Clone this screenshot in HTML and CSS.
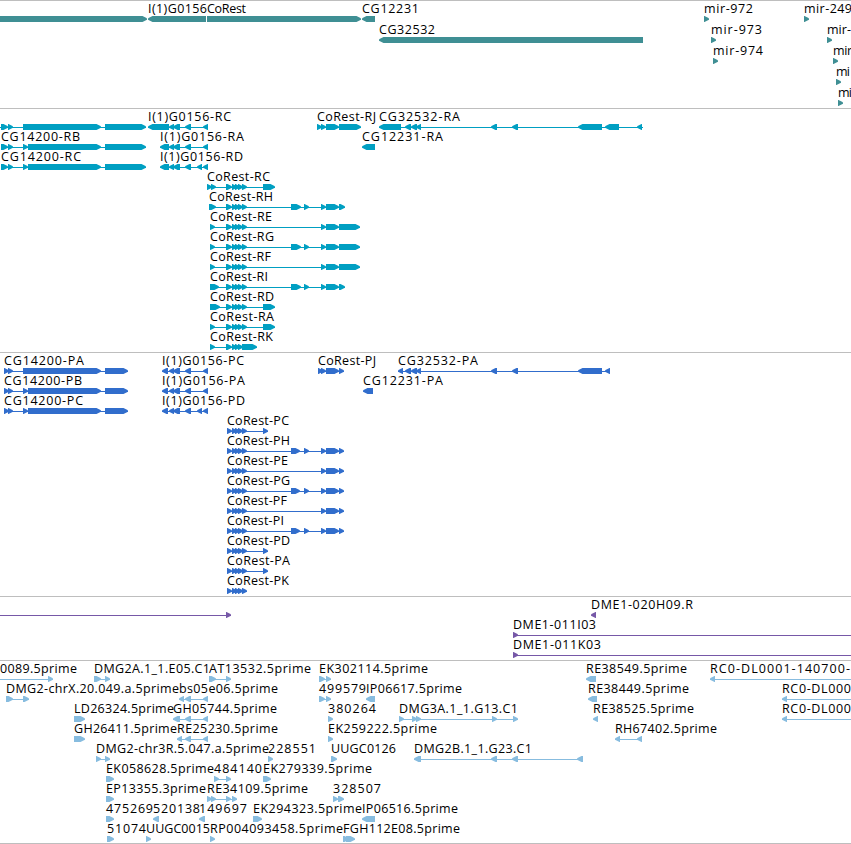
FILE: index.html
```html
<!DOCTYPE html>
<html lang="en">
<head>
    <meta charset="UTF-8">
    <title>Genome Browser</title>
    <link rel="stylesheet" href="styles.css">
</head>
<body>
    <main class="browser">
        <section class="track genes" id="genes"></section>
        <section class="track transcripts" id="transcripts"></section>
        <section class="track proteins" id="proteins"></section>
        <section class="track bacs" id="bacs"></section>
        <section class="track ests" id="ests"></section>
    </main>
    <script src="tracks.js"></script>
</body>
</html>
```
FILE: styles.css
```css
body {
    margin: 0;
    background: #fff;
    overflow: hidden;
}
.browser {
    display: flex;
    flex-direction: column;
    width: 851px;
    height: 844px;
    box-sizing: border-box;
    border-bottom: 1px solid #bebebe;
}
.track {
    box-sizing: border-box;
    border-top: 1px solid #bebebe;
    overflow: hidden;
}
.track svg {
    display: block;
    width: 100%;
    height: 100%;
}
.track text {
    font-family: "Open Sans", "DejaVu Sans", sans-serif;
    font-size: 12.5px;
    fill: #000;
}
.genes {
    height: 108px;
    color: #3f8f94;
}
.transcripts {
    height: 244px;
    color: #009fc2;
}
.proteins {
    height: 244px;
    color: #316dcc;
}
.bacs {
    height: 64px;
    color: #7658a7;
}
.ests {
    height: 183px;
    color: #87bcdf;
}
.feature {
    fill: currentColor;
}
```
FILE: tracks.js
```js
// feature: [row, label, label start, label end, direction, line, blocks]
// line and blocks are "start-end" pairs
const exons = '226-232 232-237 235-240 238-243 242-247';
const coding = '227-232 232-237 235-240 238-243 242-247';

const genes = [
    [0, '', 0, 0, '>', '', '0-147'],
    [0, 'I(1)G0156', 148, 207, '<', '', '148-206'],
    [0, 'CoRest', 207, 246, '>', '', '207-361'],
    [0, 'CG12231', 362, 419, '<', '', '362-375'],
    [1, 'CG32532', 379, 435, '<', '', '379-643'],
    [0, 'mir-972', 704, 753, '>', '', '704-709'],
    [1, 'mir-973', 711, 762, '>', '', '711-716'],
    [2, 'mir-974', 713, 763, '>', '', '713-718'],
    [0, 'mir-249', 804, 852, '>', '', '804-809'],
    [1, 'mir-', 827, 851, '>', '', '827-832'],
    [2, 'mir', 833, 852, '>', '', '833-838'],
    [3, 'mi', 836, 850, '>', '', '836-841'],
    [4, 'mi', 838, 852, '>', '', '838-843']
];

const transcripts = [
    [0, '', 0, 0, '>', '0-146', '1-8 8-13 23-101 105-146'],
    [0, 'I(1)G0156-RC', 148, 231, '<', '148-208', '148-169 169-174 173-180 185-191 203-208'],
    [0, 'CoRest-RJ', 317, 376, '>', '317-361', '317-322 321-326 326-339 339-361'],
    [0, 'CG32532-RA', 379, 460, '<', '379-643', '379-401 405-411 411-417 416-421 491-497 512-518 578-602 605-619 637-642'],
    [1, 'CG14200-RB', 1, 80, '>', '1-146', '1-8 8-13 23-28 28-101 105-146'],
    [1, 'I(1)G0156-RA', 160, 244, '<', '160-208', '160-169 169-174 173-180 185-191 203-208'],
    [1, 'CG12231-RA', 362, 443, '<', '', '362-375'],
    [2, 'CG14200-RC', 1, 81, '>', '1-146', '1-8 8-13 23-28 28-101 105-146'],
    [2, 'I(1)G0156-RD', 160, 243, '<', '160-208', '160-169 169-174 173-180 185-191 197-202 203-208'],
    [3, 'CoRest-RC', 207, 270, '>', '207-275', `207-212 211-216 ${exons} 263-275`],
    [4, 'CoRest-RH', 209, 273, '>', '209-345', `209-216 ${exons} 291-301 304-309 321-326 326-339 339-345`],
    [5, 'CoRest-RE', 210, 272, '>', '210-360', `210-215 ${exons} 321-326 326-339 339-360`],
    [6, 'CoRest-RG', 210, 274, '>', '210-360', `210-215 ${exons} 291-301 304-309 321-326 326-339 339-360`],
    [7, 'CoRest-RF', 210, 271, '>', '210-360', `210-215 ${exons} 321-326 326-339 339-360`],
    [8, 'CoRest-RI', 210, 268, '>', '210-345', `210-219 ${exons} 291-301 304-309 321-326 326-339 339-345`],
    [9, 'CoRest-RD', 210, 274, '>', '210-275', `210-220 ${exons} 263-275`],
    [10, 'CoRest-RA', 210, 274, '>', '210-275', `210-215 ${exons} 263-275`],
    [11, 'CoRest-RK', 210, 273, '>', '210-257', '210-215 226-232 232-237 235-240 238-243 242-257']
];

const proteins = [
    [0, 'CG14200-PA', 4, 84, '>', '4-128', '4-9 8-13 23-101 105-128'],
    [1, 'CG14200-PB', 4, 82, '>', '4-128', '4-9 8-13 23-28 28-101 105-128'],
    [2, 'CG14200-PC', 4, 83, '>', '4-128', '4-9 8-13 23-28 28-101 105-128'],
    [0, 'I(1)G0156-PC', 162, 244, '<', '162-208', '162-168 169-174 173-180 185-191 203-208'],
    [1, 'I(1)G0156-PA', 162, 245, '<', '162-208', '162-168 169-174 173-180 185-191 203-208'],
    [2, 'I(1)G0156-PD', 162, 245, '<', '162-208', '162-168 169-174 173-180 185-191 197-202 203-208'],
    [0, 'CoRest-PJ', 318, 376, '>', '318-344', '318-323 321-326 326-339 339-344'],
    [0, 'CG32532-PA', 398, 478, '<', '398-610', '398-403 405-411 411-417 416-421 491-497 512-518 578-602 605-610'],
    [1, 'CG12231-PA', 363, 443, '<', '', '363-373'],
    [3, 'CoRest-PC', 227, 289, '>', '227-268', `${coding} 263-268`],
    [4, 'CoRest-PH', 227, 290, '>', '227-344', `${coding} 291-300 304-309 321-326 326-339 339-344`],
    [5, 'CoRest-PE', 227, 288, '>', '227-344', `${coding} 321-326 326-339 339-344`],
    [6, 'CoRest-PG', 227, 290, '>', '227-344', `${coding} 291-300 304-309 321-326 326-339 339-344`],
    [7, 'CoRest-PF', 227, 287, '>', '227-344', `${coding} 321-326 326-339 339-344`],
    [8, 'CoRest-PI', 227, 284, '>', '227-344', `${coding} 291-300 304-309 321-326 326-339 339-344`],
    [9, 'CoRest-PD', 227, 290, '>', '227-268', `${coding} 263-268`],
    [10, 'CoRest-PA', 227, 290, '>', '227-268', `${coding} 263-268`],
    [11, 'CoRest-PK', 227, 289, '>', '227-247', coding]
];

const bacs = [
    [0, '', 0, 0, '>', '0-231', '226-231'],
    [0, 'DME1-020H09.R', 591, 693, '<', '', '591-596'],
    [1, 'DME1-011I03', 513, 596, '>', '513-851', '513-518'],
    [2, 'DME1-011K03', 513, 601, '>', '513-851', '513-518']
];

const ests = [
    [0, '0089.5prime', 0, 77, '>', '0-53', '48-53'],
    [0, 'DMG2A.1_1.E05.C1', 94, 210, '>', '94-110', '94-101 105-110'],
    [0, 'AT13532.5prime', 209, 311, '>', '209-231', '209-216 226-231'],
    [0, 'EK302114.5prime', 319, 428, '>', '319-331', '319-325 326-331'],
    [0, 'RE38549.5prime', 586, 687, '<', '', '586-596'],
    [0, 'RC0-DL0001-140700-', 710, 850, '<', '710-851', '710-715'],
    [1, 'DMG2-chrX.20.049.a.5prime', 6, 179, '>', '6-29', '6-13 23-29'],
    [1, 'bs05e06.5prime', 179, 278, '<', '179-208', '179-184 185-191 203-208'],
    [1, '499579', 319, 366, '>', '319-331', '319-325 326-331'],
    [1, 'IP06617.5prime', 366, 462, '<', '', '366-375'],
    [1, 'RE38449.5prime', 588, 689, '<', '', '588-597'],
    [1, 'RC0-DL000', 782, 851, '<', '782-851', '782-787'],
    [2, 'LD26324.5prime', 74, 174, '>', '', '74-85'],
    [2, 'GH05744.5prime', 173, 277, '<', '173-208', '173-180 185-191 203-208'],
    [2, '380264', 328, 376, '>', '', '328-333'],
    [2, 'DMG3A.1_1.G13.C1', 399, 518, '>', '399-518', '399-404 412-417 416-421 492-497 513-518'],
    [2, 'RE38525.5prime', 593, 694, '<', '', '593-598'],
    [2, 'RC0-DL000', 782, 851, '<', '782-851', '782-787'],
    [3, 'GH26411.5prime', 74, 177, '>', '', '74-85'],
    [3, 'RE25230.5prime', 177, 278, '<', '177-208', '177-182 185-191 203-208'],
    [3, 'EK259222.5prime', 328, 437, '>', '', '328-333'],
    [3, 'RH67402.5prime', 615, 717, '<', '615-642', '615-620 637-642'],
    [4, 'DMG2-chr3R.5.047.a.5prime', 96, 269, '>', '96-110', '96-101 105-110'],
    [4, '228551', 268, 316, '>', '', '268-273'],
    [4, 'UUGC0126', 331, 396, '>', '', '331-337'],
    [4, 'DMG2B.1_1.G23.C1', 414, 532, '<', '414-583', '414-421 491-497 512-518 577-583'],
    [5, 'EK058628.5prime', 106, 214, '>', '', '106-114'],
    [5, '484140', 214, 262, '>', '214-231', '214-219 226-231'],
    [5, 'EK279339.5prime', 263, 372, '>', '', '263-271'],
    [6, 'EP13355.3prime', 106, 206, '>', '', '106-114'],
    [6, 'RE34109.5prime', 207, 308, '>', '207-237', '207-212 211-216 226-231 232-237'],
    [6, '328507', 333, 381, '>', '333-344', '333-338 338-344'],
    [7, '475269', 106, 153, '>', '', '106-114'],
    [7, '520138', 153, 200, '<', '', '153-159'],
    [7, '149697', 199, 247, '<', '', '199-205'],
    [7, 'EK294323.5prime', 253, 362, '>', '', '253-262'],
    [7, 'IP06516.5prime', 362, 458, '<', '', '362-375'],
    [8, '51074', 107, 146, '>', '', '107-114'],
    [8, 'UUGC0015', 146, 210, '>', '', '146-151'],
    [8, 'RP004093458.5prime', 210, 343, '>', '', '210-215'],
    [8, 'FGH112E08.5prime', 343, 460, '>', '343-355', '343-349 346-355']
];

// a box with a 5px arrow head on its leading side
function arrow(start, end, dir, top) {
    const sign = dir === '>' ? 1 : -1;
    const tip = dir === '>' ? end : start;
    const tail = dir === '>' ? start : end;
    const neck = tip - 4.5 * sign;
    const mid = tip - 2 * sign;
    return `<path class="feature" d="M${tail} ${top}H${neck}L${mid} ${top + 1.2}L${tip} ${top + 2.5}V${top + 3.8}L${mid} ${top + 4.8}L${neck} ${top + 6}H${tail}Z"/>`;
}

function drawTrack(id, features, pitch) {
    let out = '';
    features.forEach(([row, label, from, to, dir, line, blocks]) => {
        const y = row * pitch;
        if (label) {
            out += `<text x="${from}" y="${y + 12}" textLength="${to - from}">${label}</text>`;
        }
        if (line) {
            const [a, b] = line.split('-').map(Number);
            out += `<rect class="feature" x="${a}" y="${y + 18}" width="${b - a}" height="1"/>`;
        }
        blocks.split(' ').forEach(block => {
            const [a, b] = block.split('-').map(Number);
            out += arrow(a, b, dir, y + 15);
        });
    });
    document.getElementById(id).innerHTML = `<svg>${out}</svg>`;
}

drawTrack('genes', genes, 21);
drawTrack('transcripts', transcripts, 20);
drawTrack('proteins', proteins, 20);
drawTrack('bacs', bacs, 20);
drawTrack('ests', ests, 20);
```
